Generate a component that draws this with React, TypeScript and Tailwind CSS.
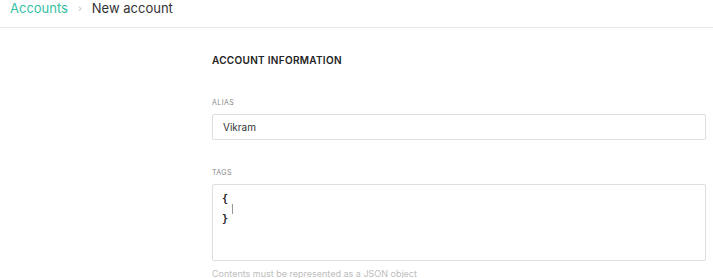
export default function App() {
  return (
    <div className="min-h-screen bg-white" style={{ fontFamily: 'Inter, "Open Sans", sans-serif' }}>
      {/* Breadcrumb */}
      <header className="h-[28px] border-b border-[#e8e8e8] pl-[10px] flex items-start">
        <div className="flex items-center gap-[10px] leading-[16px] h-[16px]">
          <span className="text-[13px] text-[#35bfa3]">Accounts</span>
          <span className="text-[10px] text-[#c4c4c4]">›</span>
          <span className="text-[13px] text-[#333]">New account</span>
        </div>
      </header>

      {/* Form */}
      <div className="pl-[212px] pr-[7px] pt-[26px]">
        <h2 className="text-[10px] font-semibold tracking-[0.03em] text-[#222] leading-[13px]">
          ACCOUNT INFORMATION
        </h2>

        <div className="mt-[31px]">
          <label className="block text-[7px] tracking-[0.06em] text-[#888] leading-[10px]">ALIAS</label>
          <div className="mt-[6px] h-[26px] border border-[#dedede] rounded-[2px] flex items-center px-[10px]">
            <span className="text-[10px] text-[#333]">Vikram</span>
          </div>
        </div>

        <div className="mt-[28px]">
          <label className="block text-[7px] tracking-[0.06em] text-[#888] leading-[10px]">TAGS</label>
          <div className="mt-[6px] h-[77px] border border-[#dedede] rounded-[2px] px-[9px] pt-[9px]">
            <div className="text-[10px] font-bold text-[#222] leading-[10px]" style={{ fontFamily: '"DejaVu Sans Mono", monospace' }}>
              <div>{'{'}</div>
              <div className="h-[10px] flex items-center pl-[10px]">
                <span className="block w-px h-[10px] bg-[#999]" />
              </div>
              <div>{'}'}</div>
            </div>
          </div>
          <p className="mt-[7px] text-[9px] text-[#bdbdbd] leading-[11px]">
            Contents must be represented as a JSON object
          </p>
        </div>
      </div>
    </div>
  );
}
